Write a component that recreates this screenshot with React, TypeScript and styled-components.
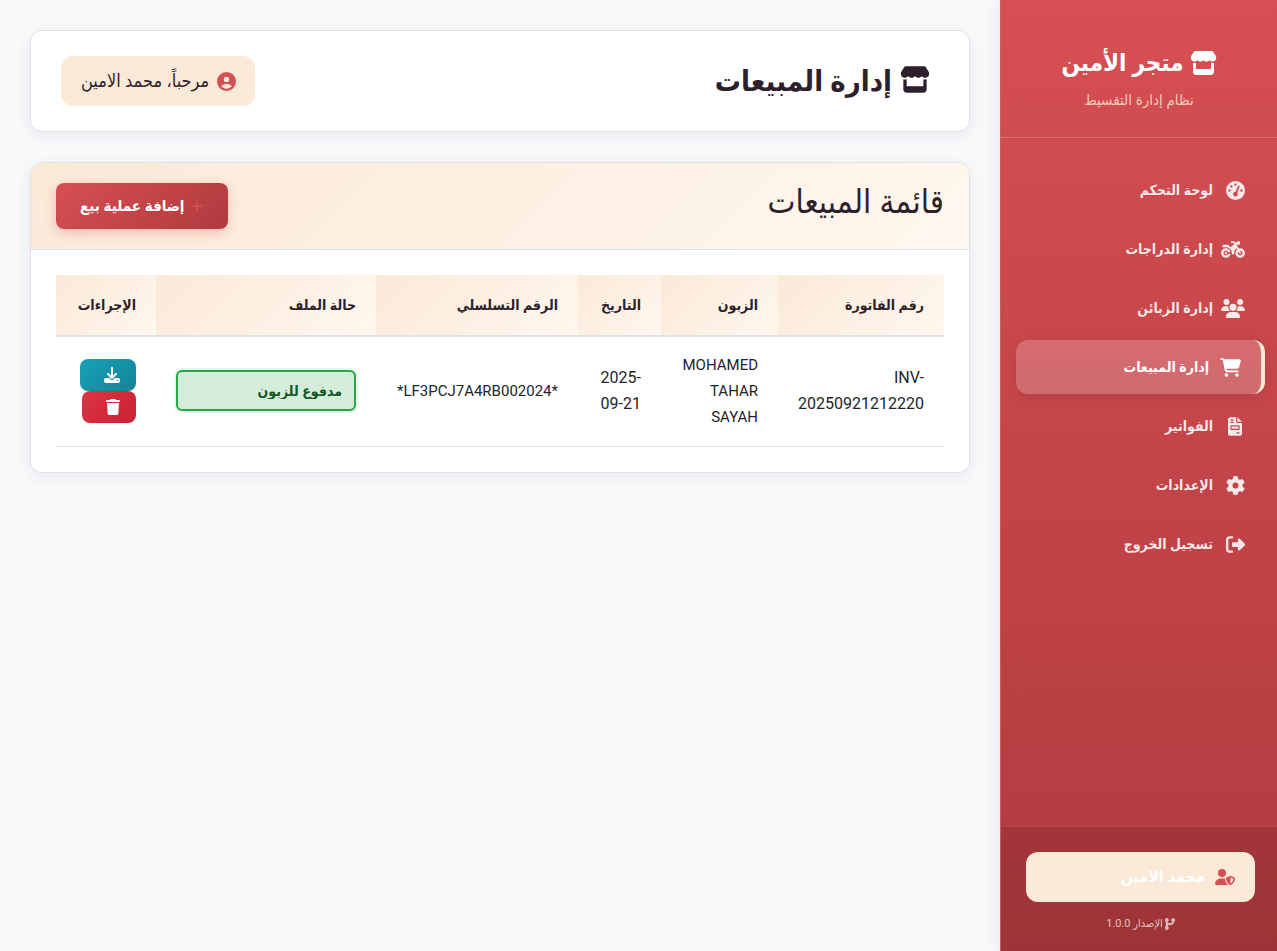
import React from 'react';
import styled, { createGlobalStyle, css } from 'styled-components';
import {
  FaStore,
  FaGaugeHigh,
  FaMotorcycle,
  FaUsers,
  FaCartShopping,
  FaFileInvoice,
  FaGear,
  FaRightFromBracket,
  FaUserShield,
  FaCodeBranch,
  FaCircleUser,
  FaPlus,
  FaDownload,
  FaTrash,
} from 'react-icons/fa6';
import type { IconType } from 'react-icons';

const color = {
  primary: '#d64f53',
  primaryDark: '#b03a3e',
  cream: '#fbe9d8',
  creamLight: '#fff7ee',
  ink: '#2d1f2b',
  line: '#dee2e6',
  page: '#f8fafc',
};

const GlobalStyle = createGlobalStyle`
  *, *::before, *::after { box-sizing: border-box; }
  body {
    margin: 0;
    background: ${color.page};
    color: ${color.ink};
    font-family: Roboto, "DejaVu Sans Condensed", "DejaVu Sans", sans-serif;
    font-size: 16px;
    line-height: 26px;
  }
  button, select { font-family: inherit; }
  svg { display: inline-block; flex-shrink: 0; }
`;

const Page = styled.div`
  display: flex;
  min-height: 100vh;
`;

const Sidebar = styled.aside`
  flex: 0 0 277px;
  display: flex;
  flex-direction: column;
  border-left: 1px solid #cc5c5c;
  background: linear-gradient(180deg, ${color.primary} 0%, ${color.primaryDark} 100%);
  box-shadow: 0 0 20px rgba(45, 31, 43, 0.1);
  color: #fff;
`;

const Brand = styled.header`
  height: 138px;
  padding: 44px 0 0;
  border-bottom: 1px solid rgba(255, 255, 255, 0.2);
  text-align: center;
`;

const BrandName = styled.h2`
  display: flex;
  align-items: center;
  justify-content: center;
  gap: 6px;
  margin: 0;
  font-size: 24px;
  line-height: 38px;
  font-weight: 700;
`;

const BrandNote = styled.p`
  margin: 6px 0 0;
  color: rgba(251, 233, 216, 0.8);
  font-size: 15px;
  line-height: 24px;
`;

const Nav = styled.nav`
  flex: 1;
  display: flex;
  flex-direction: column;
  gap: 5px;
  padding: 25px 12px 25px 15px;
`;

const NavLink = styled.a<{ $active?: boolean }>`
  display: flex;
  align-items: center;
  gap: 12px;
  height: 54px;
  padding: 0 20px;
  border-radius: 12px;
  color: rgba(255, 255, 255, 0.88);
  font-size: 14px;
  font-weight: 700;
  text-decoration: none;
  ${(p) =>
    p.$active &&
    css`
      border-right: 4px solid ${color.cream};
      background: rgba(255, 255, 255, 0.2);
      box-shadow: 0 4px 15px rgba(0, 0, 0, 0.1);
      color: #fff;
    `}
`;

const NavIcon = styled.span<{ $width: number }>`
  display: flex;
  justify-content: center;
  min-width: 20px;
  margin-left: ${(p) => Math.min(0, 20 - p.$width)}px;
  svg { width: ${(p) => p.$width}px; height: 19px; }
`;

const SidebarFooter = styled.footer`
  padding: 25px 22px 16px 25px;
  border-top: 1px solid rgba(255, 255, 255, 0.1);
  background: rgba(0, 0, 0, 0.1);
`;

const UserCard = styled.div`
  display: flex;
  align-items: center;
  gap: 10px;
  height: 50px;
  padding: 0 20px;
  border-radius: 12px;
  background: ${color.cream};
  color: #fff;
  font-size: 16px;
  font-weight: 700;
  svg { width: 20px; height: 16px; color: ${color.primary}; }
`;

const Version = styled.p`
  display: flex;
  align-items: center;
  justify-content: center;
  gap: 2px;
  margin: 11px 0 0;
  color: rgba(255, 255, 255, 0.7);
  font-size: 11px;
  line-height: 22px;
  svg { width: 10px; height: 12px; stroke: currentColor; stroke-width: 16px; }
`;

const StoreIcon = styled(FaStore)<{ $width: number; $height: number }>`
  width: ${(p) => p.$width}px;
  height: ${(p) => p.$height}px;
`;

const Main = styled.main`
  flex: 1;
  min-width: 0;
  padding: 30px;
`;

const Card = styled.section`
  margin-bottom: 30px;
  overflow: hidden;
  border: 1px solid ${color.line};
  border-radius: 12px;
  background: #fff;
  box-shadow: 0 4px 20px rgba(45, 31, 43, 0.08);
`;

const TopBar = styled(Card)`
  display: flex;
  align-items: center;
  justify-content: space-between;
  padding: 25px 39px 25px 30px;
`;

const PageTitle = styled.h1`
  display: flex;
  align-items: center;
  gap: 8px;
  margin: 0;
  font-size: 29px;
  line-height: 46px;
  font-weight: 700;
  svg { margin-bottom: 4px; }
`;

const Welcome = styled.div`
  display: flex;
  align-items: center;
  gap: 8px;
  height: 50px;
  padding: 0 19px 0 20px;
  border-radius: 12px;
  background: ${color.cream};
  font-size: 18px;
  svg { color: ${color.primary}; font-size: 19px; }
`;

const CardHeader = styled.header`
  display: flex;
  align-items: flex-start;
  justify-content: space-between;
  padding: 20px 25px;
  border-bottom: 1px solid ${color.line};
  background: linear-gradient(135deg, ${color.cream} 0%, ${color.creamLight} 100%);
`;

const CardTitle = styled.h2`
  margin: 0;
  font-size: 33px;
  line-height: 38px;
  font-weight: 400;
`;

const AddButton = styled.button`
  display: flex;
  align-items: center;
  gap: 6px;
  height: 46px;
  padding: 0 24px;
  border: 0;
  border-radius: 8px;
  background: linear-gradient(135deg, ${color.primary} 0%, ${color.primaryDark} 100%);
  box-shadow: 0 4px 12px rgba(214, 79, 83, 0.3);
  color: #fff;
  font-size: 15px;
  font-weight: 700;
  svg { color: ${color.primary}; font-size: 14px; }
`;

const CardBody = styled.div`
  padding: 25px;
`;

const Table = styled.table`
  width: 100%;
  table-layout: fixed;
  border-collapse: separate;
  border-spacing: 0;
  text-align: right;
`;

const HeadCell = styled.th<{ $width: number }>`
  width: ${(p) => p.$width}px;
  height: 62px;
  padding: 0 20px;
  border-bottom: 2px solid ${color.line};
  background: linear-gradient(135deg, ${color.cream} 0%, ${color.creamLight} 100%);
  font-size: 14px;
  font-weight: 700;
  text-align: right;
  white-space: nowrap;
`;

const Cell = styled.td<{ $letters?: boolean }>`
  padding: 15px 20px 16px;
  border-bottom: 1px solid ${color.line};
  color: #212529;
  font-size: ${(p) => (p.$letters ? 15 : 16)}px;
  vertical-align: middle;
`;

const ControlCell = styled(Cell)`
  padding: 15px 20px 17px;
`;

const StatusSelect = styled.select`
  display: block;
  width: 100%;
  height: 41px;
  padding: 0 12px;
  appearance: none;
  border: 2px solid #28a745;
  border-radius: 6px;
  background: #d4edda;
  box-shadow: 0 0 0 2px rgba(40, 167, 69, 0.1);
  color: #155724;
  font-size: 14px;
  font-weight: 700;
`;

const Actions = styled.div`
  display: flex;
  flex-direction: column;
  align-items: flex-start;
`;

const ActionButton = styled.button<{ $tone: 'info' | 'danger' }>`
  display: flex;
  align-items: center;
  height: 32px;
  padding: 0 16px 0 24px;
  border: 0;
  border-radius: 8px;
  background: ${(p) =>
    p.$tone === 'info'
      ? 'linear-gradient(135deg, #17a2b8 0%, #138496 100%)'
      : 'linear-gradient(135deg, #dc3545 0%, #c82333 100%)'};
  color: #fff;
  svg { width: ${(p) => (p.$tone === 'info' ? 16 : 14)}px; height: 16px; }
`;

type NavEntry = { label: string; icon: IconType; iconWidth: number; active?: boolean };

const navEntries: NavEntry[] = [
  { label: 'لوحة التحكم', icon: FaGaugeHigh, iconWidth: 19 },
  { label: 'إدارة الدراجات', icon: FaMotorcycle, iconWidth: 24 },
  { label: 'إدارة الزبائن', icon: FaUsers, iconWidth: 24 },
  { label: 'إدارة المبيعات', icon: FaCartShopping, iconWidth: 21, active: true },
  { label: 'الفواتير', icon: FaFileInvoice, iconWidth: 14 },
  { label: 'الإعدادات', icon: FaGear, iconWidth: 19 },
  { label: 'تسجيل الخروج', icon: FaRightFromBracket, iconWidth: 19 },
];

const columns = [
  { label: 'رقم الفاتورة', width: 166 },
  { label: 'الزبون', width: 117 },
  { label: 'التاريخ', width: 83 },
  { label: 'الرقم التسلسلي', width: 202 },
  { label: 'حالة الملف', width: 220 },
  { label: 'الإجراءات', width: 100 },
];

export default function App() {
  return (
    <>
      <GlobalStyle />
      <Page dir="rtl" lang="ar">
        <Sidebar>
          <Brand>
            <BrandName>
              <StoreIcon $width={27} $height={24} />
              متجر الأمين
            </BrandName>
            <BrandNote>نظام إدارة التقسيط</BrandNote>
          </Brand>
          <Nav>
            {navEntries.map(({ label, icon: Icon, iconWidth, active }) => (
              <NavLink key={label} href="#" $active={active} aria-current={active ? 'page' : undefined}>
                <NavIcon $width={iconWidth}>
                  <Icon />
                </NavIcon>
                {label}
              </NavLink>
            ))}
          </Nav>
          <SidebarFooter>
            <UserCard>
              <FaUserShield />
              محمد الامين
            </UserCard>
            <Version>
              <FaCodeBranch />
              الإصدار 1.0.0
            </Version>
          </SidebarFooter>
        </Sidebar>

        <Main>
          <TopBar as="header">
            <PageTitle>
              <StoreIcon $width={30} $height={27} />
              إدارة المبيعات
            </PageTitle>
            <Welcome>
              <FaCircleUser />
              مرحباً، محمد الامين
            </Welcome>
          </TopBar>

          <Card>
            <CardHeader>
              <CardTitle>قائمة المبيعات</CardTitle>
              <AddButton type="button">
                <FaPlus />
                إضافة عملية بيع
              </AddButton>
            </CardHeader>
            <CardBody>
              <Table>
                <thead>
                  <tr>
                    {columns.map((c) => (
                      <HeadCell key={c.label} $width={c.width} scope="col">
                        {c.label}
                      </HeadCell>
                    ))}
                  </tr>
                </thead>
                <tbody>
                  <tr>
                    <Cell dir="ltr">
                      INV-
                      <wbr />
                      20250921212220
                    </Cell>
                    <Cell dir="ltr" $letters>
                      MOHAMED TAHAR SAYAH
                    </Cell>
                    <Cell dir="ltr">
                      2025-
                      <wbr />
                      09-21
                    </Cell>
                    <Cell dir="ltr" $letters>
                      *LF3PCJ7A4RB002024*
                    </Cell>
                    <ControlCell>
                      <StatusSelect aria-label="حالة الملف" defaultValue="paid">
                        <option value="paid">مدفوع للزبون</option>
                      </StatusSelect>
                    </ControlCell>
                    <ControlCell>
                      <Actions>
                        <ActionButton type="button" $tone="info" aria-label="تحميل">
                          <FaDownload />
                        </ActionButton>
                        <ActionButton type="button" $tone="danger" aria-label="حذف">
                          <FaTrash />
                        </ActionButton>
                      </Actions>
                    </ControlCell>
                  </tr>
                </tbody>
              </Table>
            </CardBody>
          </Card>
        </Main>
      </Page>
    </>
  );
}
